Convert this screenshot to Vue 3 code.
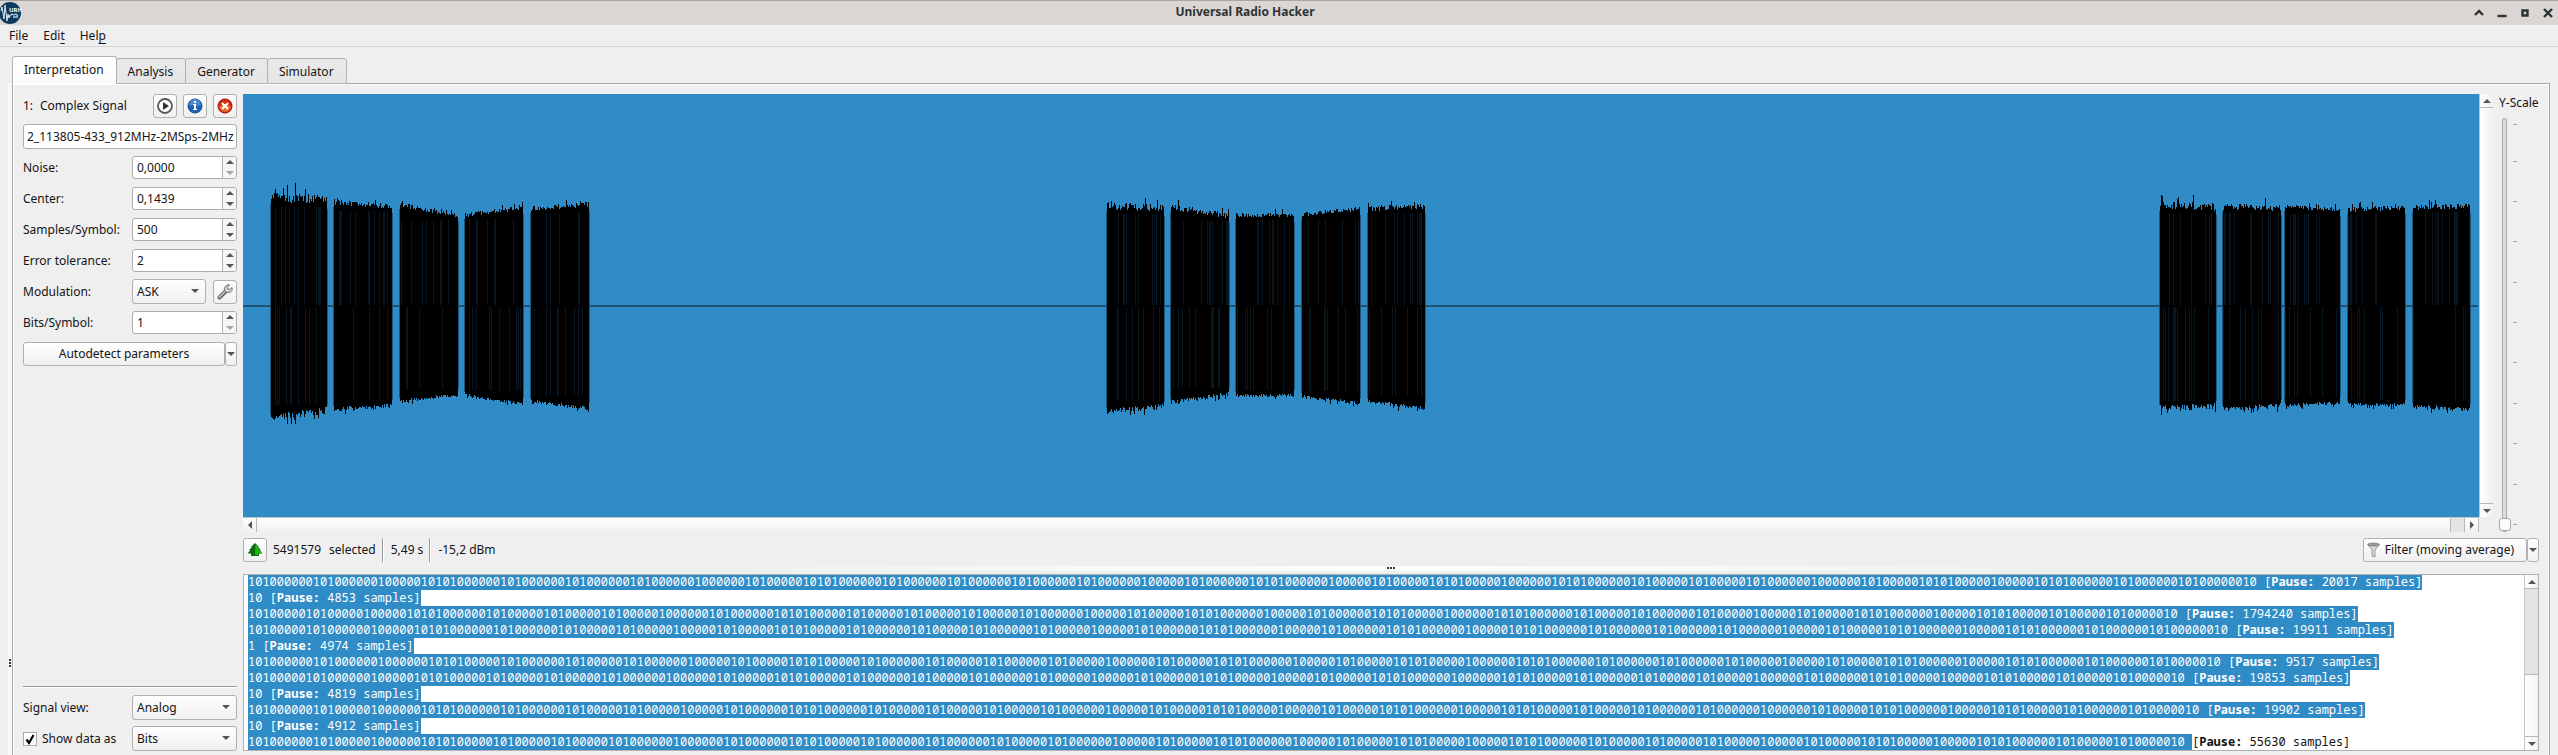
<script setup>
import { ref } from 'vue'

const tabs = ['Interpretation', 'Analysis', 'Generator', 'Simulator']
const activeTab = ref('Interpretation')
const menus = [['Fi', 'l', 'e'], ['Edi', 't', ''], ['Hel', 'p', '']]

const fields = [
  { id: 'noise', label: 'Noise:', value: '0,0000', atMin: true },
  { id: 'center', label: 'Center:', value: '0,1439' },
  { id: 'sps', label: 'Samples/Symbol:', value: '500' },
  { id: 'tolerance', label: 'Error tolerance:', value: '2' },
  { id: 'modulation', label: 'Modulation:', value: 'ASK', select: true },
  { id: 'bps', label: 'Bits/Symbol:', value: '1', atMin: true },
]

// Each message is a series of marks, every mark followed by a run of zeros.
const marks = { A: '101', B: '1', C: '10101' }
const frame = 'AABCAAABACAAAABACBACBCAAABACBCAAA'
const bits = (gaps) => [...gaps].map((n, i) => marks[frame[i]] + '0'.repeat(+n)).join('') + '10'

const messages = [
  { bits: bits('66566666566666566555665566555666'), pause: 20017 },
  { bits: '10', pause: 4853 },
  { bits: bits('55565556655556556565665655565555'), pause: 1794240 },
  { bits: bits('56566555556565566566566665565666'), pause: 19911 },
  { bits: '1', pause: 4974 },
  { bits: bits('66656565556565656555666655565665'), pause: 9517 },
  { bits: bits('56555566556565565556656556655555'), pause: 19853 },
  { bits: '10', pause: 4819 },
  { bits: bits('65666555665556555556555666565565'), pause: 19902 },
  { bits: '10', pause: 4912 },
  { bits: bits('65655566656656556555565555555655'), pause: 55630, open: true },
]

// Bursts: start, end, top at start/end, bottom at start/end, noise height
const bursts = [
  [28, 84, 108, 111, 325, 317, 20], [91, 149, 111, 115, 316, 312, 11],
  [157, 215, 113, 124, 308, 301, 9], [222, 280, 123, 116, 302, 310, 9],
  [288, 346, 117, 113, 308, 315, 10],
  [864, 921, 115, 118, 318, 313, 15], [928, 986, 116, 125, 309, 300, 12],
  [993, 1051, 123, 124, 302, 302, 9], [1059, 1117, 123, 117, 303, 310, 9],
  [1125, 1182, 117, 115, 308, 315, 11],
  [1917, 1973, 115, 117, 315, 313, 16], [1980, 2038, 116, 117, 315, 312, 13],
  [2042, 2097, 115, 118, 312, 309, 9], [2105, 2162, 118, 116, 311, 312, 10],
  [2170, 2227, 116, 115, 313, 316, 11],
]
let seed = 7
const rnd = () => {
  seed = (seed * 16807) % 2147483647
  return seed / 2147483647
}
let shape = ''
let streaks = ''
let edges = ''
for (const [x0, x1, t0, t1, b0, b1, amp] of bursts) {
  const n = x1 - x0
  let low = ''
  shape += `M${x0} 212`
  for (let i = 0; i < n; i++) {
    const k = i / n
    const up = rnd() > 0.88 ? amp : amp / 2
    const down = rnd() > 0.85 ? amp * 0.7 : amp * 0.4
    const top = Math.round(t0 + (t1 - t0) * k - rnd() * up)
    const bottom = Math.round(b0 + (b1 - b0) * k - amp / 4 + rnd() * down)
    shape += `V${top}h1`
    low = `V${bottom}h-1` + low
    if (rnd() > 0.84) streaks += `M${x0 + i} ${Math.max(t0, t1) + 2}h1V211h-1z`
    if (rnd() > 0.86) streaks += `M${x0 + i} 213h1V${Math.min(b0, b1) - 6}h-1z`
  }
  shape += low + 'z'
  edges += `M${x0 - 1} ${t0 + 2}h1V${b0 - 4}h-1zM${x1} ${t1 + 4}h1V${b1 - 6}h-1z`
}

const ticks = [6, 43, 83, 123, 164, 204, 244, 285, 325, 366, 406]
</script>

<template>
  <div class="window">
    <header class="titlebar">
      <svg class="logo" viewBox="0 0 22 22" aria-hidden="true">
        <circle cx="10" cy="11" r="11" fill="#0c3b5e" />
        <path d="M1 9l1-4 2 12 1-14 2 16 1-7 1 4 1-3 1 1" fill="none" stroke="#dfe8ee" stroke-width="1" />
        <text x="9" y="10" font-size="6">URH</text>
        <path d="M10 14l2-2 2 1 2-1 2 2M13 15h5" fill="none" stroke="#b8c8d4" stroke-width="1.3" />
      </svg>
      <h1>Universal Radio Hacker</h1>
      <div class="win-buttons">
        <button aria-label="Shade"><svg viewBox="0 0 10 10"><path d="M1 7l4-4 4 4" /></svg></button>
        <button aria-label="Minimize"><svg viewBox="0 0 10 10"><path d="M.5 8h9" /></svg></button>
        <button aria-label="Maximize"><svg viewBox="0 0 10 10"><path d="M2.500 2.500h5v5h-5z" /></svg></button>
        <button aria-label="Close"><svg viewBox="0 0 10 10"><path d="M1 1l8 8M9 1L1 9" /></svg></button>
      </div>
    </header>

    <nav class="menubar">
      <button v-for="m in menus" :key="m[0]">{{ m[0] }}<u>{{ m[1] }}</u>{{ m[2] }}</button>
    </nav>

    <div class="tabs" role="tablist">
      <button
        v-for="t in tabs" :key="t" role="tab" class="tab"
        :class="{ active: t === activeTab }" :aria-selected="t === activeTab" @click="activeTab = t"
      >{{ t }}</button>
    </div>

    <div class="body">
      <div class="side-handle"><i></i><i></i><i></i></div>
      <main class="frame">
        <section class="params">
          <div class="row head">
            <span class="num">1:</span><span class="grow">Complex Signal</span>
            <button class="tool" aria-label="Replay signal">
              <svg viewBox="0 0 16 16"><circle cx="8" cy="8" r="7" fill="#fff" stroke="#555753" stroke-width="1.800" /><path d="M6 4l6 4-6 4z" fill="#2e3436" /></svg>
            </button>
            <button class="tool" aria-label="Signal details">
              <svg viewBox="0 0 16 16"><circle cx="8" cy="8" r="7" fill="#1f62b5" stroke="#17468a" /><path d="M2 7a6 6 0 0112 0q-6 2-12 0z" fill="#5e97d8" opacity=".7" /><path d="M7 3h2v2H7zM6 6h3v5h1v1H6v-1h1V7H6z" fill="#fff" /></svg>
            </button>
            <button class="tool" aria-label="Close signal">
              <svg viewBox="0 0 16 16"><circle cx="8" cy="8" r="7" fill="#d52b0c" stroke="#a40000" /><path d="M2 8a6 6 0 0012 0q-6-2-12 0z" fill="#f0853a" opacity=".7" /><path d="M5 5l6 6M11 5l-6 6" stroke="#fff" stroke-width="2.200" /></svg>
            </button>
          </div>
          <div class="row">
            <input class="name" aria-label="Signal name" value="2_113805-433_912MHz-2MSps-2MHz" />
          </div>
          <div v-for="f in fields" :key="f.id" class="row">
            <label class="caption" :for="f.id">{{ f.label }}</label>
            <template v-if="f.select">
              <span class="combo modulation"><select :id="f.id"><option>{{ f.value }}</option></select></span>
              <button class="tool" aria-label="Modulation settings">
                <svg viewBox="0 0 16 16"><path d="M2.500 13.500L9 7" stroke="#6a6c68" stroke-width="4" stroke-linecap="round" /><path d="M2.500 13L9 6.500" stroke="#c4c6c2" stroke-width="1.600" stroke-linecap="round" /><path d="M12.500 1l-2 2.500.5 1.500 1.500.5L15 3.500c1 3-1.500 5.500-4.500 5-3-.5-4-3-2.500-5.500C9 1.500 10.500.5 12.500 1z" fill="#cfd1cd" stroke="#555753" stroke-width=".8" /></svg>
              </button>
            </template>
            <span v-else class="spin">
              <input :id="f.id" :value="f.value" />
              <span class="steps">
                <button aria-label="Increase"><i class="arrow up"></i></button>
                <button aria-label="Decrease" :disabled="f.atMin"><i class="arrow down"></i></button>
              </span>
            </span>
          </div>
          <div class="row">
            <button class="push grow">Autodetect parameters</button>
            <button class="push more" aria-label="Autodetect options"><i class="arrow down"></i></button>
          </div>

          <div class="spacer"></div>
          <hr />
          <div class="row">
            <label class="caption" for="view">Signal view:</label>
            <span class="combo"><select id="view"><option>Analog</option></select></span>
          </div>
          <div class="row">
            <label class="caption check">
              <span class="box">
                <input type="checkbox" checked />
                <svg viewBox="0 0 12 12" aria-hidden="true"><path d="M2.500 6.500l2.500 3.500L9.500 2" fill="none" stroke="#000" stroke-width="2.200" /></svg>
              </span>Show data as
            </label>
            <span class="combo"><select aria-label="Data format"><option>Bits</option></select></span>
          </div>
        </section>

        <section class="signal">
          <div class="plot-area">
            <svg class="plot" viewBox="0 0 2236 423" preserveAspectRatio="none" role="img" aria-label="Signal waveform">
              <path :d="edges" fill="#1c5577" />
              <path d="M0 211h2235v2H0z" fill="#1d5272" />
              <path :d="shape" fill="#000" />
              <path :d="streaks" fill="#071722" />
            </svg>
            <div class="vbar">
              <button aria-label="Scroll up"><i class="arrow up"></i></button>
              <div class="trough"></div>
              <button aria-label="Scroll down"><i class="arrow down"></i></button>
            </div>
            <div class="yscale">
              <label for="yscale">Y-Scale</label>
              <div class="slide">
                <input id="yscale" type="range" min="1" max="100" value="1" />
                <svg class="ticks" viewBox="0 0 4 414" preserveAspectRatio="none" aria-hidden="true">
                  <rect v-for="t in ticks" :key="t" x="0" :y="t" width="4" height="1" fill="#aaa" />
                </svg>
              </div>
            </div>
            <div class="hbar">
              <button aria-label="Scroll left"><i class="arrow left"></i></button>
              <div class="trough"></div>
              <div class="thumb"></div>
              <button aria-label="Scroll right"><i class="arrow right"></i></button>
            </div>
          </div>

          <div class="info">
            <button class="tool" aria-label="Hide selection">
              <svg viewBox="0 0 16 16"><path d="M8 1l4 4h-1l3 3h-1.500l3 3.500H12V14H4v-2.500H.5L3.500 8H2l3-3H4z" fill="#0b6b10" /><path d="M8.500 2L11 5h-1l3 3h-2l3.500 3H11v2H8z" fill="#17bd0e" /></svg>
            </button>
            <span class="count">5491579</span><span>selected</span>
            <i class="vline"></i><span>5,49 s</span><i class="vline"></i><span>-15,2 dBm</span>
            <span class="grow"></span>
            <button class="push filter">
              <svg viewBox="0 0 16 16"><path d="M2 3l4 5v6l3 1V8l4-5z" fill="#d8d8d8" stroke="#888a85" stroke-width=".8" /><ellipse cx="7.500" cy="2.500" rx="6" ry="1.500" fill="#999" stroke="#666" stroke-width=".6" /></svg>
              Filter (moving average)
            </button>
            <button class="push more" aria-label="Filter options"><i class="arrow down"></i></button>
          </div>

          <div class="split"><i></i><i></i><i></i></div>

          <div class="data">
            <div class="lines">
              <div v-for="(m, i) in messages" :key="i" class="line">
                <span class="sel">{{ m.bits + ' ' }}</span><span :class="{ sel: !m.open }">[<b>Pause:</b> {{ m.pause }} samples]</span>
              </div>
            </div>
            <div class="vbar databar">
              <button aria-label="Scroll up"><i class="arrow up"></i></button>
              <div class="groove"></div>
              <div class="grip"></div>
              <button aria-label="Scroll down"><i class="arrow down"></i></button>
            </div>
          </div>
        </section>
      </main>
    </div>
  </div>
</template>

<style>
body { margin: 0; background: #efefef; }
</style>

<style scoped>
* { box-sizing: border-box; }
.window {
  display: flex; flex-direction: column; height: 100vh; overflow: hidden;
  background: #efefef; color: #141414; font: 12px/16px "Noto Sans", sans-serif;
}
button, input, select { font: inherit; color: inherit; margin: 0; padding: 0; }
button { background: none; border: 0; }
.grow { flex: 1; }

.titlebar {
  display: flex; align-items: center; flex: none; height: 25px;
  background: #dad6d3; border-top: 1px solid #aaa49d; color: #2e3436;
}
.titlebar h1 { flex: 1; margin: 0; padding-right: 6px; padding-bottom: 2px; text-align: center; font-size: 12px; line-height: 16px; font-weight: 700; }
.logo { width: 22px; height: 22px; }
.logo text { fill: #fff; font-weight: 700; font-family: "Noto Sans", sans-serif; }
.win-buttons { display: flex; gap: 13px; padding-right: 5px; }
.win-buttons button { width: 10px; height: 10px; display: flex; }
.win-buttons svg { width: 10px; height: 10px; fill: none; stroke: #2e3436; stroke-width: 2.4; }

.menubar {
  display: flex; flex: none; gap: 15px; height: 22px; padding-left: 9px;
  border-bottom: 1px solid #d3d3d3; align-items: center;
}
.menubar u { text-underline-offset: 3px; }

.tabs { display: flex; flex: none; align-items: flex-end; height: 37px; padding-left: 12px; position: relative; z-index: 1; margin-bottom: -1px; }
.tab {
  height: 26px; padding: 2px 12px 0 11px; margin-left: -1px;
  background: linear-gradient(#e9e9e9, #e5e5e5); border: 1px solid #b2b2b2; border-radius: 3px 3px 0 0;
}
.tab.active { height: 28px; margin-left: 0; padding: 0 12px 0 11px; background: linear-gradient(#fff, #fafafa); border-bottom-color: #fff; }

.body { display: flex; flex: 1; min-height: 0; padding-right: 8px; }
.side-handle {
  flex: none; width: 12px; display: flex; flex-direction: column; gap: 1px; align-items: flex-end; justify-content: flex-end;
  padding: 0 1px 88px 0; background: linear-gradient(90deg, #efefef 8px, #f8f8f8 8px);
}
.side-handle i { width: 2px; height: 2px; background: #333; }
.frame {
  flex: 1; min-width: 0; display: flex; gap: 6px; padding: 0 10px;
  border: 1px solid #a6a6a6; border-bottom: 0; box-shadow: inset 1px 1px #fff, inset -1px 0 #fff;
}

.params { flex: none; width: 214px; display: flex; flex-direction: column; padding: 6px 0 1px; }
.row { display: flex; align-items: center; flex: none; height: 31px; }
.head .num { width: 17px; }
.caption { width: 109px; flex: none; }
.spacer { flex: 1; }
.params hr { flex: none; width: 100%; height: 2px; margin: 0 0 4px; border: 0; background: linear-gradient(#9c9c9c 1px, #fff 1px); }
.tool, .push {
  border: 1px solid #b0b0b0; border-radius: 3px; background: linear-gradient(#fefefe, #f0f0f0);
  display: flex; align-items: center; justify-content: center;
}
.tool { width: 24px; height: 24px; flex: none; }
.tool + .tool { margin-left: 6px; }
.tool svg { width: 16px; height: 16px; }
.push { height: 24px; }
.more { width: 12px; }
.name, .spin { border: 1px solid #adadad; border-radius: 3px; background: #fff; }
.name { width: 100%; height: 25px; padding-left: 3px; }
.spin { flex: 1; display: flex; height: 23px; overflow: hidden; }
.spin input { flex: 1; min-width: 0; border: 0; background: none; padding-left: 4px; outline: 0; }
.steps { width: 14px; display: flex; flex-direction: column; border-left: 1px solid #b4b4b4; background: #f6f6f6; }
.steps button { flex: 1; display: flex; align-items: center; justify-content: center; }
.steps button:disabled { opacity: .5; }
.combo { position: relative; flex: 1; height: 25px; }
.combo select {
  width: 100%; height: 25px; padding-left: 4px; appearance: none;
  border: 1px solid #b0b0b0; border-radius: 3px; background: linear-gradient(#fefefe, #f0f0f0);
}
.combo::after {
  content: ""; position: absolute; right: 7px; top: 10px;
  border: 4px solid transparent; border-top-color: #555; border-bottom: 0;
}
.combo.modulation { flex: none; width: 74px; margin-right: 7px; }
.check { display: flex; align-items: center; gap: 5px; }
.box { position: relative; width: 14px; height: 14px; }
.box input { appearance: none; display: block; width: 14px; height: 14px; border: 1px solid #aaa; background: #fff; }
.box svg { position: absolute; left: 1px; top: 1px; width: 12px; height: 12px; pointer-events: none; }

.arrow { width: 0; height: 0; border: 4px solid transparent; }
.arrow.up { border-top: 0; border-bottom-color: #555; }
.arrow.down { border-bottom: 0; border-top-color: #555; }
.arrow.left { border-left: 0; border-right-color: #555; }
.arrow.right { border-right: 0; border-left-color: #555; }

.signal { flex: 1; min-width: 0; display: flex; flex-direction: column; padding: 10px 0 4px; }
.plot-area { flex: 1; min-height: 0; display: grid; grid-template: minmax(0, 1fr) 15px / minmax(0, 1fr) 14px 46px; }
.plot { width: 100%; height: 100%; background: #308cc6; shape-rendering: crispEdges; }
.vbar { display: flex; flex-direction: column; background: linear-gradient(90deg, #fff, #f0f0f0); border-left: 1px solid #c4c4c4; }
.vbar button { flex: none; height: 14px; display: flex; align-items: center; justify-content: center; border-bottom: 1px solid #b8b8b8; }
.vbar button:last-child { border-bottom: 0; border-top: 1px solid #b8b8b8; }
.trough { flex: 1; }
.hbar { display: flex; grid-row: 2; grid-column: 1; background: linear-gradient(#fff, #f0f0f0); border-top: 1px solid #c4c4c4; border-right: 1px solid #b8b8b8; }
.hbar button { flex: none; width: 14px; display: flex; align-items: center; justify-content: center; border-right: 1px solid #b8b8b8; }
.hbar button:last-child { border-right: 0; border-left: 1px solid #b8b8b8; }
.thumb { width: 14px; background: #e4e4e4; border-left: 1px solid #b8b8b8; }
.yscale { grid-row: 1 / 3; grid-column: 3; display: flex; flex-direction: column; padding-left: 5px; }
.yscale label { flex: none; height: 24px; line-height: 18px; padding-left: 1px; white-space: nowrap; }
.slide { flex: 1; min-height: 0; display: flex; gap: 3px; }
.slide input { appearance: none; writing-mode: vertical-lr; direction: rtl; width: 12px; height: 100%; background: none; }
.slide input::-webkit-slider-runnable-track {
  width: 5px; border: 1px solid #aaa; border-radius: 2px; background: #ddd;
}
.slide input::-webkit-slider-thumb {
  appearance: none; width: 12px; height: 13px; margin-left: -4px;
  border: 1px solid #aaa; border-radius: 3px; background: #fbfbfb;
}
.ticks { width: 4px; height: 100%; }

.info { display: flex; align-items: center; flex: none; height: 24px; line-height: 18px; margin-top: 6px; }
.info .count { margin: 0 8px 0 6px; }
.vline { width: 2px; height: 24px; margin: 0 7px 0 6px; border-left: 1px solid #9c9c9c; border-right: 1px solid #fff; }
.filter { gap: 3px; padding: 0 12px 0 2px; }
.filter svg { width: 16px; height: 16px; }
.split {
  flex: none; height: 12px; display: flex; gap: 1px; justify-content: center; align-items: center;
  background: linear-gradient(90deg, #efefef 20%, #fff 50%, #efefef 80%) center / 100% 5px no-repeat;
}
.split i { width: 2px; height: 2px; background: #333; }

.data { flex: none; display: flex; height: 177px; border: 1px solid #b0b0b0; background: #fff; }
.lines { flex: 1; min-width: 0; display: flex; flex-direction: column; justify-content: flex-end; overflow: hidden; padding-left: 4px; }
.line { flex: none; height: 16px; white-space: pre; font: 12px/16px "Noto Sans Mono", "Liberation Mono", monospace; color: #111; display: flex; }
.sel { background: #308cc6; color: #fff; }
.databar { width: 14px; }
.databar .groove { flex: 86; background: #e4e4e4; }
.databar .grip { flex: 61; border-top: 1px solid #b8b8b8; background: linear-gradient(90deg, #fff, #f4f4f4); }
</style>
